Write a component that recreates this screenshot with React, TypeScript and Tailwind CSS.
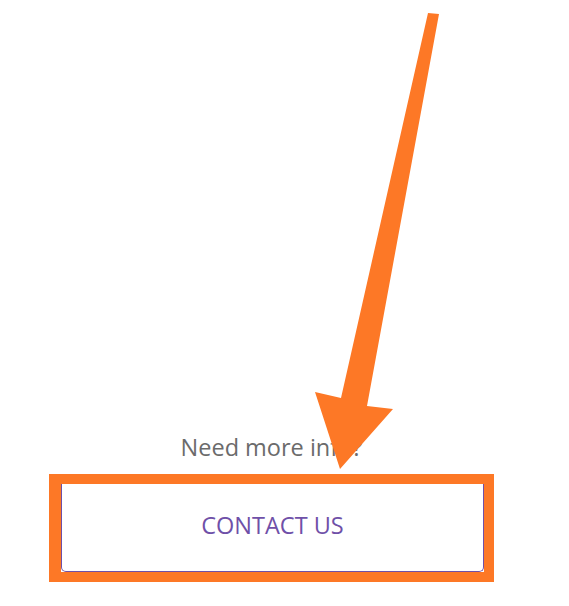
const Arrow = () => (
  <svg
    className="pointer-events-none absolute left-0 top-0"
    width="569"
    height="606"
    viewBox="0 0 569 606"
  >
    <polygon
      points="428,13 439,14 367,406 393,409 340,469 315,392 341,398"
      fill="#fd7826"
    />
  </svg>
);

export default function App() {
  return (
    <div className="relative flex h-[606px] w-full flex-col justify-end bg-white pb-[24px] font-['Open_Sans',sans-serif]">
      <div className="ml-[49px] flex w-[445px] flex-col">
        <p className="mb-[11px] text-center text-[23.5px] leading-[32px] text-[#6b6b6b]">
          Need more info?
        </p>
        <div className="border-y-[10px] border-l-[12px] border-r-[10px] border-[#fd7826]">
          <button className="flex h-[88px] w-full items-center justify-center rounded-b-[5px] border-x border-b border-[#6f50a8] bg-white pb-[6px] text-[23.5px] leading-[32px] text-[#6f50a8]">
            CONTACT US
          </button>
        </div>
      </div>
      <Arrow />
    </div>
  );
}
